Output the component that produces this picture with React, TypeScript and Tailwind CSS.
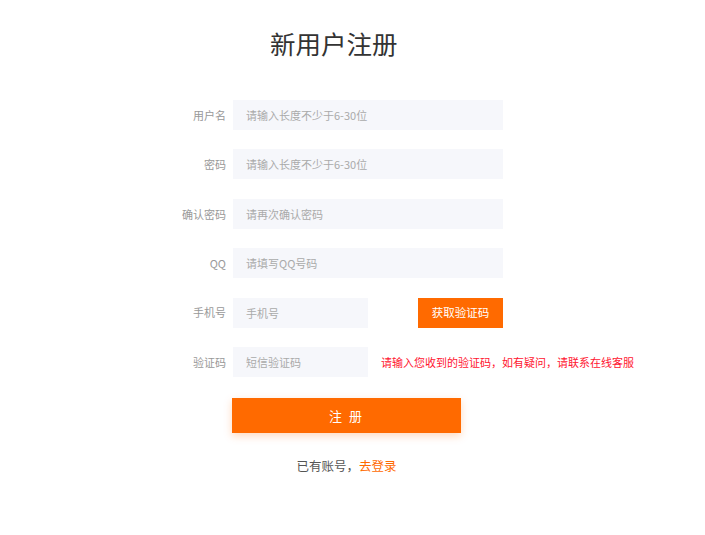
const font = { fontFamily: '"Microsoft YaHei", "Noto Sans CJK SC", sans-serif' };

function Field({
  label,
  placeholder,
  short,
  type = "text",
}: {
  label: string;
  placeholder: string;
  short?: boolean;
  type?: string;
}) {
  return (
    <div className="flex items-center">
      <label className="w-[60px] shrink-0 text-right text-[11px] text-[#999]">{label}</label>
      <input
        type={type}
        placeholder={placeholder}
        className={
          "ml-[7px] h-[30px] bg-[#f6f7fb] px-[13px] text-[11px] text-[#333] outline-none placeholder:text-[#aaa] " +
          (short ? "w-[135px]" : "w-[270px]")
        }
      />
    </div>
  );
}

export default function App() {
  return (
    <div className="min-h-[535px] w-full bg-white pt-[26px]" style={font}>
      <h1 className="ml-[270px] text-[25.5px] leading-[34px] text-[#333]">新用户注册</h1>

      <div className="ml-[166px] mt-[40px] flex flex-col gap-[19.4px]">
        <Field label="用户名" placeholder="请输入长度不少于6-30位" />
        <Field label="密码" placeholder="请输入长度不少于6-30位" type="password" />
        <Field label="确认密码" placeholder="请再次确认密码" type="password" />
        <Field label="QQ" placeholder="请填写QQ号码" />
        <div className="flex items-center">
          <Field label="手机号" placeholder="手机号" short />
          <button className="ml-[50px] h-[30px] w-[85px] bg-[#ff6a00] text-[11.5px] text-white">
            获取验证码
          </button>
        </div>
        <div className="flex items-center">
          <Field label="验证码" placeholder="短信验证码" short />
          <span className="ml-[13px] text-[11px] text-[#ff1430]">
            请输入您收到的验证码，如有疑问，请联系在线客服
          </span>
        </div>
      </div>

      <button className="ml-[232px] mt-[21px] h-[35px] w-[229px] bg-[#ff6a00] text-[13px] tracking-[2px] text-white shadow-[0_3px_8px_rgba(255,106,0,0.25)]">
        注 册
      </button>

      <p className="ml-[232px] mt-[24px] w-[229px] text-center text-[12.5px] text-[#555]">
        已有账号，<a className="text-[#ff6a00]" href="#">去登录</a>
      </p>
    </div>
  );
}
